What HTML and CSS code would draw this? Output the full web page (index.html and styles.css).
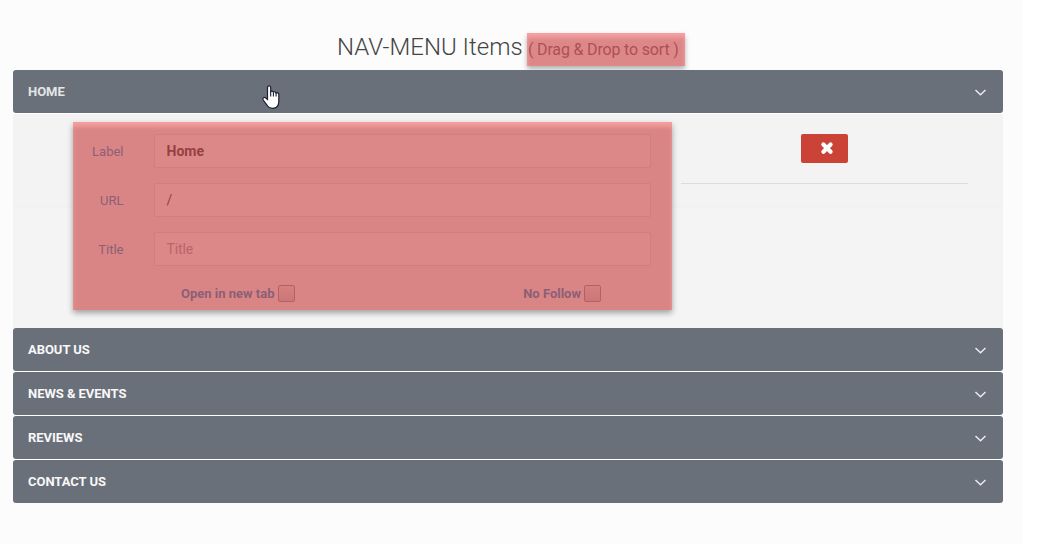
FILE: index.html
```html
<!DOCTYPE html>
<html lang="en">
<head>
<meta charset="utf-8">
<title>NAV-MENU Items</title>
<link rel="stylesheet" href="styles.css">
</head>
<body>
<svg class="defs" width="0" height="0"><symbol id="chevron" viewBox="0 0 12 8"><path d="M1.500 2 6.500 6.800l5-4.800" fill="none" stroke="#e9ebed" stroke-width="1.500"/></symbol></svg>
<main class="page">
  <h1 class="heading"><span class="heading-text">NAV-MENU Items</span><small class="hint">( Drag &amp; Drop to sort )</small></h1>
  <section class="accordion">
    <div class="bar bar-open"><span>HOME</span><svg class="chevron"><use href="#chevron"/></svg>
      <svg class="cursor" viewBox="0 0 18 25"><path d="M5.500 14.500V2.500C5.500.2 8.700.2 8.700 2.500v4.200c.6-.9 2.400-.7 2.700.5.700-.8 2.400-.5 2.700.8.900-.7 2.700-.1 2.700 1.500v6.800c0 4-2 7-6 7-3 0-4.700-1.200-6-3.500L1.200 15c-1-1.800.8-3.200 2.300-2.200z" fill="#fff" stroke="#1d2030" stroke-width="1.200"/><path d="M8.700 6.500v5m2.700-4v4m2.700-3.500v3.500" stroke="#1d2030" stroke-width="1.100" fill="none"/></svg>
    </div>
    <div class="panel">
      <form class="fields">
        <div class="row"><label class="label">Label</label><div class="input strong">Home</div></div>
        <div class="row"><label class="label">URL</label><div class="input">/</div></div>
        <div class="row"><label class="label">Title</label><div class="input placeholder">Title</div></div>
        <div class="checks"><label class="check">Open in new tab<i class="box"></i></label><label class="check">No Follow<i class="box"></i></label></div>
      </form>
      <div class="actions"><button class="remove" type="button" aria-label="Remove"><svg width="14" height="14" viewBox="0 0 14 14"><path d="M3.400 3.600l7.200 7.200M10.600 3.600L3.400 10.800" stroke="#fff" stroke-width="4.200" stroke-linecap="round"/></svg></button></div>
    </div>
    <div class="bar"><span>ABOUT US</span><svg class="chevron"><use href="#chevron"/></svg></div>
    <div class="bar"><span>NEWS &amp; EVENTS</span><svg class="chevron"><use href="#chevron"/></svg></div>
    <div class="bar"><span>REVIEWS</span><svg class="chevron"><use href="#chevron"/></svg></div>
    <div class="bar"><span>CONTACT US</span><svg class="chevron"><use href="#chevron"/></svg></div>
  </section>
</main>
</body>
</html>
```
FILE: styles.css
```css
* { box-sizing: border-box; }
body { margin: 0; background: #fff; font-family: Roboto, sans-serif; font-size: 13px; overflow: hidden; }
.defs { display: block; position: absolute; }
.page { width: 1023px; height: 544px; background: #fcfcfc; padding: 33px 20px 0 13px; }
.heading { display: flex; height: 37px; margin: 0; padding-left: 324px; font-weight: 300; color: #444; }
.heading-text { width: 190px; font-size: 24px; line-height: 28px; white-space: nowrap; }
.hint {
  width: 158px; height: 33px; padding-left: 1px; font-size: 16px; font-weight: 400; line-height: 33px;
  letter-spacing: -.17px; white-space: nowrap; color: #ad5056; background: #dd8888; position: relative;
  box-shadow: inset 0 5px 5px -1px #f9a0a2, inset 0 2px 4px #ee9294, 0 3px 5px rgba(0,0,0,.3);
}
.accordion { background: #fff; }
.bar {
  position: relative; display: flex; align-items: center; justify-content: space-between;
  height: 43px; margin-bottom: 1px; padding: 0 17px 0 15px; border-radius: 3px;
  background: #6a707a; color: #f8f8f8; font-weight: 700; letter-spacing: -.04px;
}
.bar:last-child { margin-bottom: 0; }
.bar-open { color: #e4e5e6; }
.chevron { width: 12px; height: 8px; }
.cursor { position: absolute; left: 249px; top: 15px; width: 18px; height: 25px; }
.panel { display: flex; height: 214px; padding: 8px 35px 0 60px; background: linear-gradient(#f3f3f3 0 89px, #f2f2f2 89px 94px, #f4f4f4 94px); }
.fields {
  width: 599px; height: 188px; padding: 12px 21px 0 0; background: #da8585;
  box-shadow: inset 0 6px 5px -2px #f7a0a1, inset 0 3px 5px #e68f8f, 0 3px 6px rgba(0,0,0,.35);
}
.row { display: flex; align-items: center; height: 34px; margin-bottom: 15px; }
.label { width: 50.500px; margin-right: 30.500px; text-align: right; color: #8b6075; }
.input { width: 497px; height: 34px; padding-left: 11.500px; border: 1px solid #d27d7f; border-radius: 2px; background: #dd8888; color: #974044; font-size: 14px; line-height: 32px; }
.strong { font-weight: 700; }
.placeholder { color: #b9666a; letter-spacing: -.1px; }
.checks { display: flex; justify-content: space-between; padding: 4px 50px 0 108px; }
.check { display: flex; align-items: center; gap: 3px; height: 17px; color: #8b6075; font-weight: 700; }
.box { width: 17px; height: 17px; border: 1px solid #b7605f; border-radius: 2px; background: linear-gradient(#d68080, #ca7779); }
.actions { width: 287px; height: 62px; margin-left: 9px; padding: 12px 0 0 120px; border-bottom: 1px solid #dcdcdc; }
.remove { display: block; width: 47px; height: 29px; padding: 0 0 2px 5px; border: 0; border-radius: 2px; background: #cb4237; }
.remove svg { display: block; margin: 0 auto; }
```
